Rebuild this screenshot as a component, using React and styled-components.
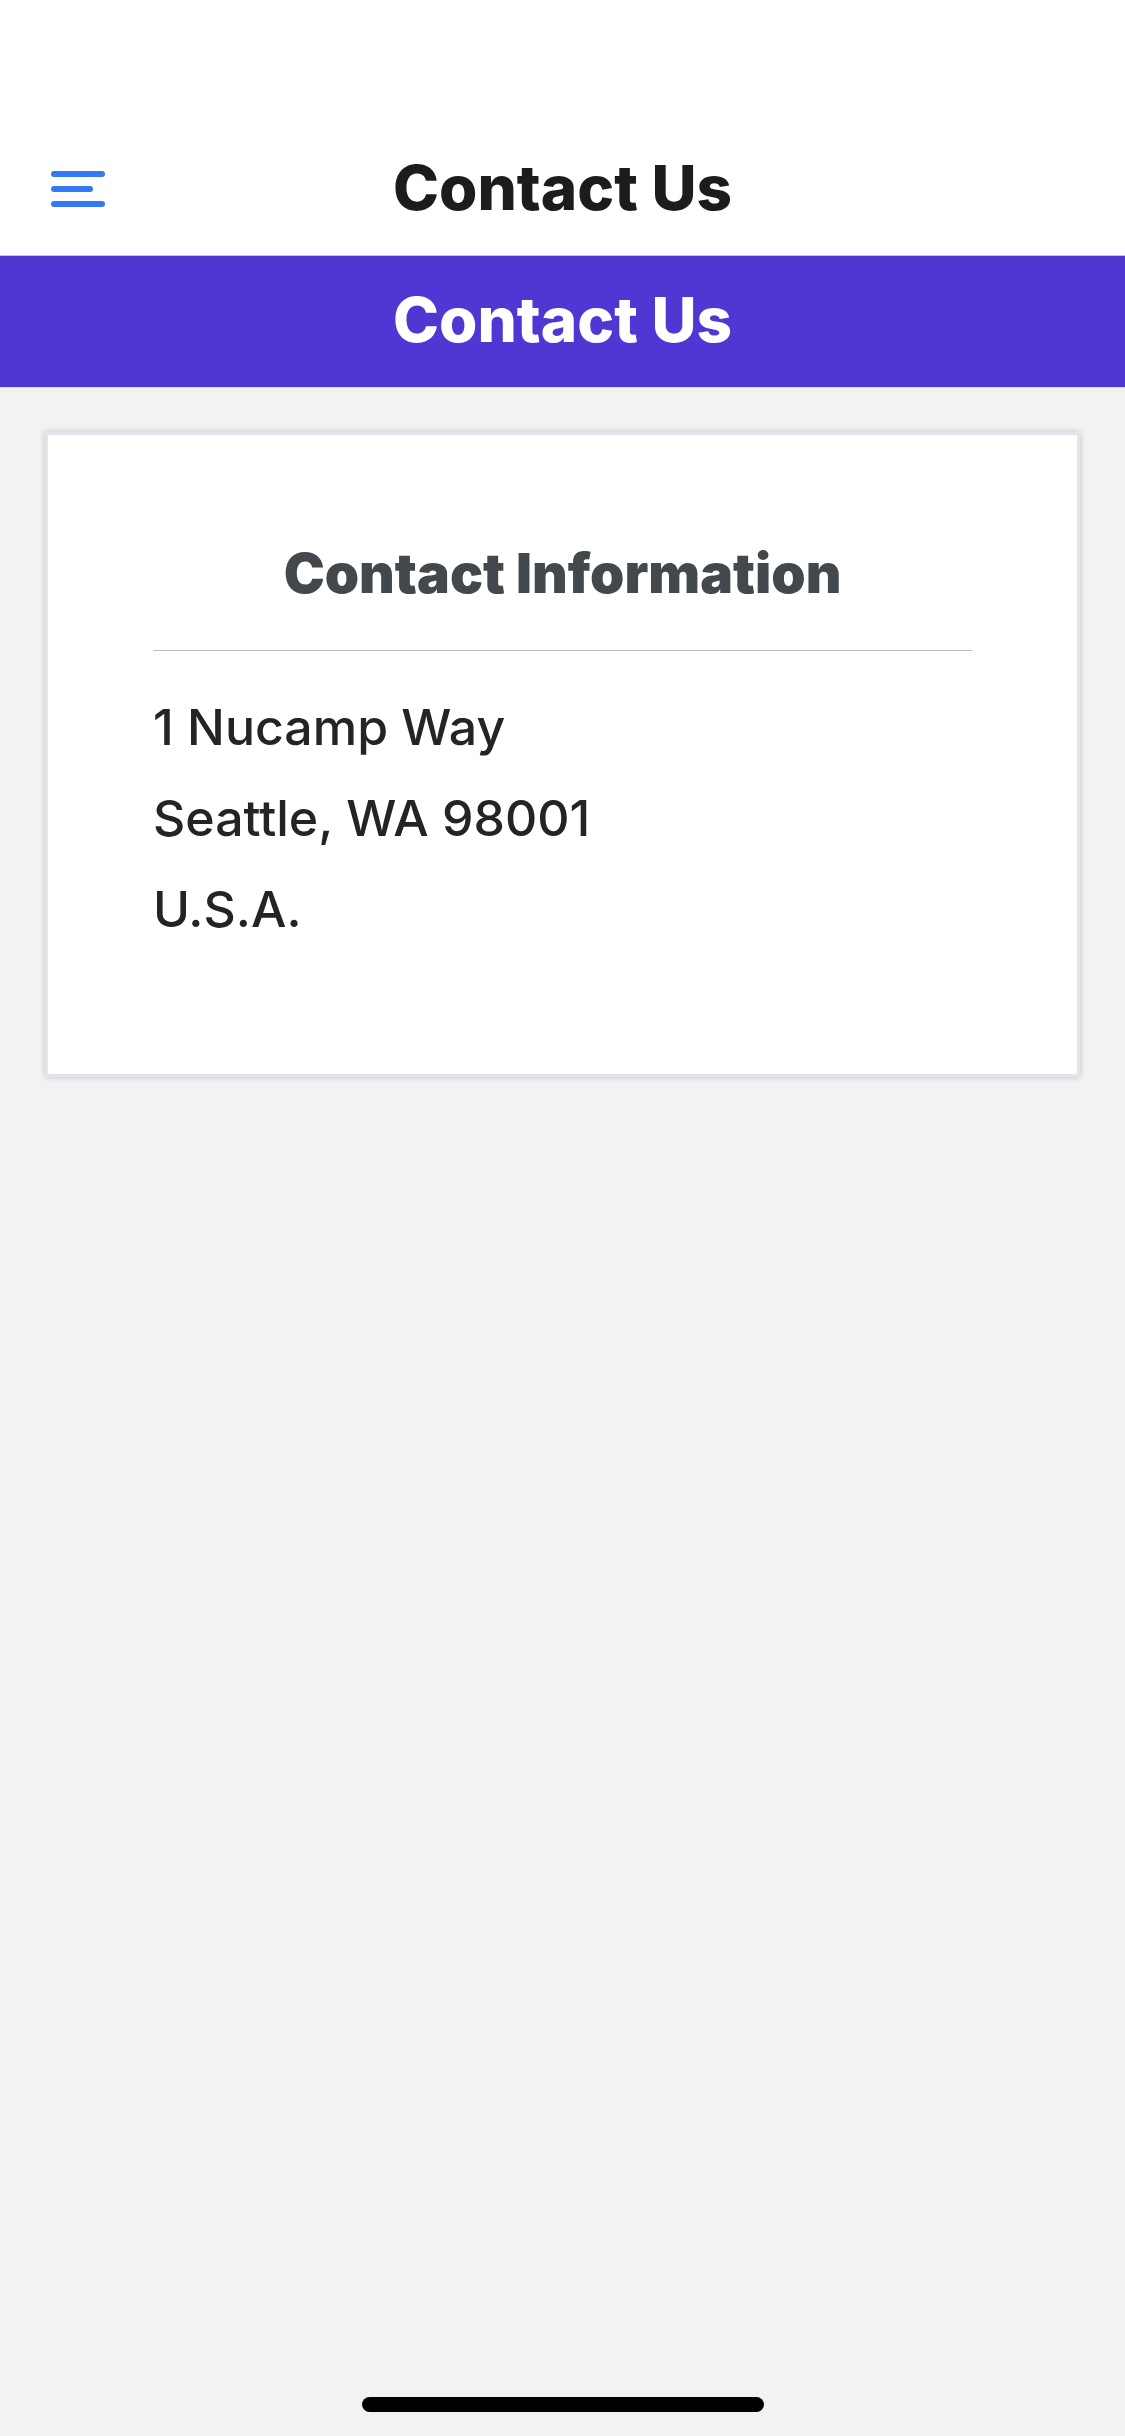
import React from "react";
import styled, { createGlobalStyle } from "styled-components";

const GlobalStyle = createGlobalStyle`
  * { box-sizing: border-box; }
  html, body, #root { margin: 0; min-height: 100vh; }
  body { background: #f2f2f2; font-family: Inter, "Liberation Sans", sans-serif; }
`;

const Screen = styled.div`
  min-height: 100vh;
  display: flex;
  flex-direction: column;
`;

const NavBar = styled.header`
  display: grid;
  grid-template-columns: 56px 1fr 56px;
  align-items: center;
  padding: 120px 50px 0;
  height: 256px;
  background: #fff;
  border-bottom: 1px solid #c6c6cc;
`;

const MenuButton = styled.button`
  display: flex;
  padding: 3px 0 0;
  border: 0;
  background: none;
  color: #3478f6;
`;

const Title = styled.h1`
  margin: 0;
  text-align: center;
  font-size: 62px;
  line-height: 74px;
  font-weight: 800;
  color: ${(p) => p.$color};
`;

const Banner = styled.div`
  padding: 27px 0 30px;
  background: #5037d3;
  border-bottom: 1px solid #dedee6;
`;

const Main = styled.main`
  flex: 1;
  padding: 44px 45px;
`;

const Card = styled.section`
  padding: 105px 105px 119px;
  background: #fff;
  border: 3px solid #e1e6ee;
  box-shadow: 0 0 6px rgba(0, 0, 0, 0.2);
`;

const CardTitle = styled.h2`
  margin: 0;
  padding-bottom: 44px;
  border-bottom: 1px solid #bcbcc0;
  text-align: center;
  font-size: 55px;
  line-height: 66px;
  font-weight: 900;
  color: #43484d;
`;

const Address = styled.address`
  margin-top: 31px;
  font-style: normal;
  font-size: 50px;
  line-height: 91px;
  font-weight: 500;
  color: #242424;
`;

const Line = styled.div``;

const HomeIndicator = styled.footer`
  display: flex;
  justify-content: center;
  padding-bottom: 24px;
`;

const HomeBar = styled.div`
  width: 402px;
  height: 15px;
  border-radius: 8px;
  background: #000;
`;

export default function App() {
  return (
    <Screen>
      <GlobalStyle />
      <NavBar>
        <MenuButton type="button" aria-label="Menu">
          <svg width="56" height="38" viewBox="0 0 56 38" fill="none" stroke="currentColor" strokeWidth="6" strokeLinecap="round">
            <path d="M4 4H52M4 19H40M4 34H52" />
          </svg>
        </MenuButton>
        <Title $color="#1c1c1c">Contact Us</Title>
      </NavBar>
      <Banner>
        <Title as="div" $color="#fff">Contact Us</Title>
      </Banner>
      <Main>
        <Card>
          <CardTitle>Contact Information</CardTitle>
          <Address>
            <Line>1 Nucamp Way</Line>
            <Line>Seattle, WA 98001</Line>
            <Line>U.S.A.</Line>
          </Address>
        </Card>
      </Main>
      <HomeIndicator>
        <HomeBar />
      </HomeIndicator>
    </Screen>
  );
}
